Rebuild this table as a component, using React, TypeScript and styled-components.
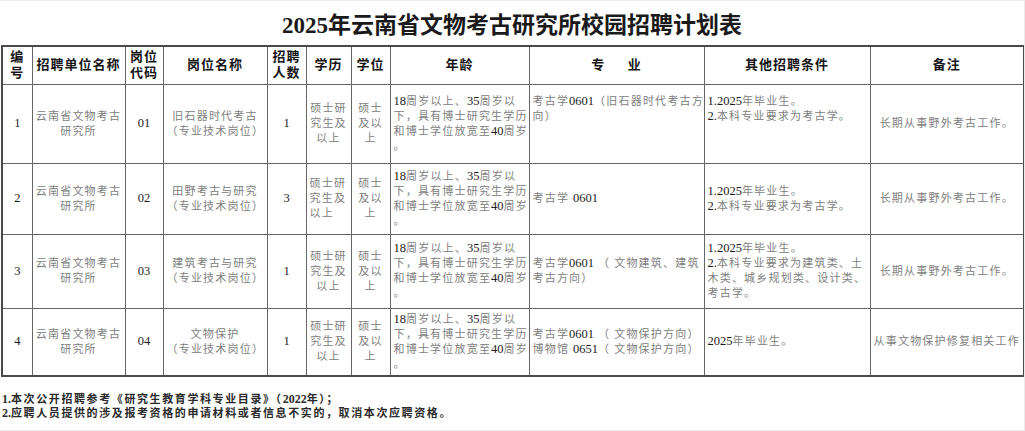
import React from "react";
import styled, { createGlobalStyle } from "styled-components";

const GlobalStyle = createGlobalStyle`
	html, body {
		margin: 0;
		padding: 0;
		background: #fff;
	}
`;

const FONT = `"Liberation Serif", "Noto Sans CJK SC", serif`;

type Align = "left" | "center";
type VAlign = "top" | "middle";

type Row = {
	no: string;
	unit: string[];
	code: string;
	post: string[];
	count: string;
	edu: string[];
	eduAlign?: Align;
	degree: string[];
	major: string[];
	other: string[];
	top?: boolean;
	remark: string;
};

const widths = [30, 93, 38, 104, 39, 45, 39, 139, 175, 166, 154];
const heights = [79, 71, 74, 68];

const headers: string[][] = [
	["编", "号"],
	["招聘单位名称"],
	["岗位", "代码"],
	["岗位名称"],
	["招聘", "人数"],
	["学历"],
	["学位"],
	["年龄"],
	["专\u3000\u00a0\u00a0业"],
	["其他招聘条件"],
	["备注"],
];

const age = ["18周岁以上、35周岁以", "下，具有博士研究生学历", "和博士学位放宽至40周岁", "。"];

const rows: Row[] = [
	{
		no: "1",
		unit: ["云南省文物考古", "研究所"],
		code: "01",
		post: ["旧石器时代考古", "（专业技术岗位）"],
		count: "1",
		edu: ["硕士研", "究生及", "以上"],
		degree: ["硕士", "及以", "上"],
		major: ["考古学0601（旧石器时代考古方", "向）"],
		other: ["1.2025年毕业生。", "2.本科专业要求为考古学。"],
		top: true,
		remark: "长期从事野外考古工作。",
	},
	{
		no: "2",
		unit: ["云南省文物考古", "研究所"],
		code: "02",
		post: ["田野考古与研究", "（专业技术岗位）"],
		count: "3",
		edu: ["硕士研", "究生及", "以上"],
		eduAlign: "left",
		degree: ["硕士", "及以", "上"],
		major: ["考古学 0601"],
		other: ["1.2025年毕业生。", "2.本科专业要求为考古学。"],
		remark: "长期从事野外考古工作。",
	},
	{
		no: "3",
		unit: ["云南省文物考古", "研究所"],
		code: "03",
		post: ["建筑考古与研究", "（专业技术岗位）"],
		count: "1",
		edu: ["硕士研", "究生及", "以上"],
		degree: ["硕士", "及以", "上"],
		major: ["考古学0601 （ 文物建筑、建筑", "考古方向）"],
		other: ["1.2025年毕业生。", "2.本科专业要求为建筑类、土", "木类、城乡规划类、设计类、", "考古学。"],
		remark: "长期从事野外考古工作。",
	},
	{
		no: "4",
		unit: ["云南省文物考古", "研究所"],
		code: "04",
		post: ["文物保护", "（专业技术岗位）"],
		count: "1",
		edu: ["硕士研", "究生及", "以上"],
		degree: ["硕士", "及以", "上"],
		major: ["考古学0601 （ 文物保护方向）", "博物馆 0651（ 文物保护方向）"],
		other: ["2025年毕业生。"],
		remark: "从事文物保护修复相关工作",
	},
];

const Page = styled.div`
	width: 1025px;
	height: 431px;
	box-sizing: border-box;
	border: 1px solid #ececec;
	border-left: none;
	overflow: hidden;
	font-family: ${FONT};
`;

const Title = styled.h1`
	margin: 0;
	height: 44px;
	display: flex;
	align-items: center;
	justify-content: center;
	font-size: 23px;
	font-weight: 700;
	color: #1a1a1a;
`;

const Table = styled.table`
	width: 1022px;
	margin-left: 1px;
	border-collapse: collapse;
	table-layout: fixed;
	border: 2px solid #4a4a4a;
`;

const Col = styled.col<{ $w: number }>`
	width: ${(p) => p.$w}px;
`;

const HeadRow = styled.tr`
	height: 38px;
`;

const BodyRow = styled.tr<{ $h: number }>`
	height: ${(p) => p.$h}px;
`;

const HeadCell = styled.th`
	border: 1px solid #666;
	padding: 0;
	font-size: 13px;
	line-height: 16px;
	font-weight: 700;
	letter-spacing: 1px;
	color: #161616;
	text-align: center;
	vertical-align: middle;
	white-space: nowrap;
`;

const Cell = styled.td<{ $align?: Align; $valign?: VAlign }>`
	border: 1px solid #666;
	padding: ${(p) => (p.$valign === "top" ? "9px 3px 0" : "0 3px")};
	font-size: 11px;
	line-height: 15px;
	letter-spacing: 1.2px;
	color: #808080;
	text-align: ${(p) => p.$align ?? "center"};
	vertical-align: ${(p) => p.$valign ?? "middle"};
	white-space: nowrap;
	overflow: hidden;
`;

const Num = styled.span`
	font-family: "Liberation Serif", serif;
	font-size: 12.5px;
	letter-spacing: 0;
	color: #1c1c1c;
`;

const Footer = styled.div`
	padding: 15px 0 0 2px;
	font-size: 11px;
	line-height: 14px;
	font-weight: 700;
	letter-spacing: 1.6px;
	color: #2a2a2a;
`;

const FootNum = styled.span`
	font-family: "Liberation Serif", serif;
	font-size: 12px;
	letter-spacing: 0;
`;

const withNums = (s: string, Wrap: typeof Num | typeof FootNum = Num) =>
	s.split(/(\d[\d.]*)/).map((part, i) =>
		/^\d/.test(part) ? <Wrap key={i}>{part}</Wrap> : <React.Fragment key={i}>{part}</React.Fragment>
	);

const Lines: React.FC<{ lines: string[] }> = ({ lines }) => (
	<>
		{lines.map((line, i) => (
			<React.Fragment key={i}>
				{i > 0 && <br />}
				{withNums(line)}
			</React.Fragment>
		))}
	</>
);

const App: React.FC = () => {
	return (
		<Page>
			<GlobalStyle />
			<Title>2025年云南省文物考古研究所校园招聘计划表</Title>
			<Table>
				<colgroup>
					{widths.map((w, i) => (
						<Col key={i} $w={w} />
					))}
				</colgroup>
				<thead>
					<HeadRow>
						{headers.map((h, i) => (
							<HeadCell key={i}>
								{h.map((line, j) => (
									<React.Fragment key={j}>
										{j > 0 && <br />}
										{line}
									</React.Fragment>
								))}
							</HeadCell>
						))}
					</HeadRow>
				</thead>
				<tbody>
					{rows.map((r, i) => (
						<BodyRow key={r.no} $h={heights[i]}>
							<Cell>
								<Num>{r.no}</Num>
							</Cell>
							<Cell>
								<Lines lines={r.unit} />
							</Cell>
							<Cell>
								<Num>{r.code}</Num>
							</Cell>
							<Cell>
								<Lines lines={r.post} />
							</Cell>
							<Cell>
								<Num>{r.count}</Num>
							</Cell>
							<Cell $align={r.eduAlign}>
								<Lines lines={r.edu} />
							</Cell>
							<Cell>
								<Lines lines={r.degree} />
							</Cell>
							<Cell $align="left">
								<Lines lines={age} />
							</Cell>
							<Cell $align="left" $valign={r.top ? "top" : "middle"}>
								<Lines lines={r.major} />
							</Cell>
							<Cell $align="left" $valign={r.top ? "top" : "middle"}>
								<Lines lines={r.other} />
							</Cell>
							<Cell>{r.remark}</Cell>
						</BodyRow>
					))}
				</tbody>
			</Table>
			<Footer>
				{withNums("1.本次公开招聘参考《研究生教育学科专业目录》（2022年）；", FootNum)}
				<br />
				{withNums("2.应聘人员提供的涉及报考资格的申请材料或者信息不实的，取消本次应聘资格。", FootNum)}
			</Footer>
		</Page>
	);
};

export default App;
